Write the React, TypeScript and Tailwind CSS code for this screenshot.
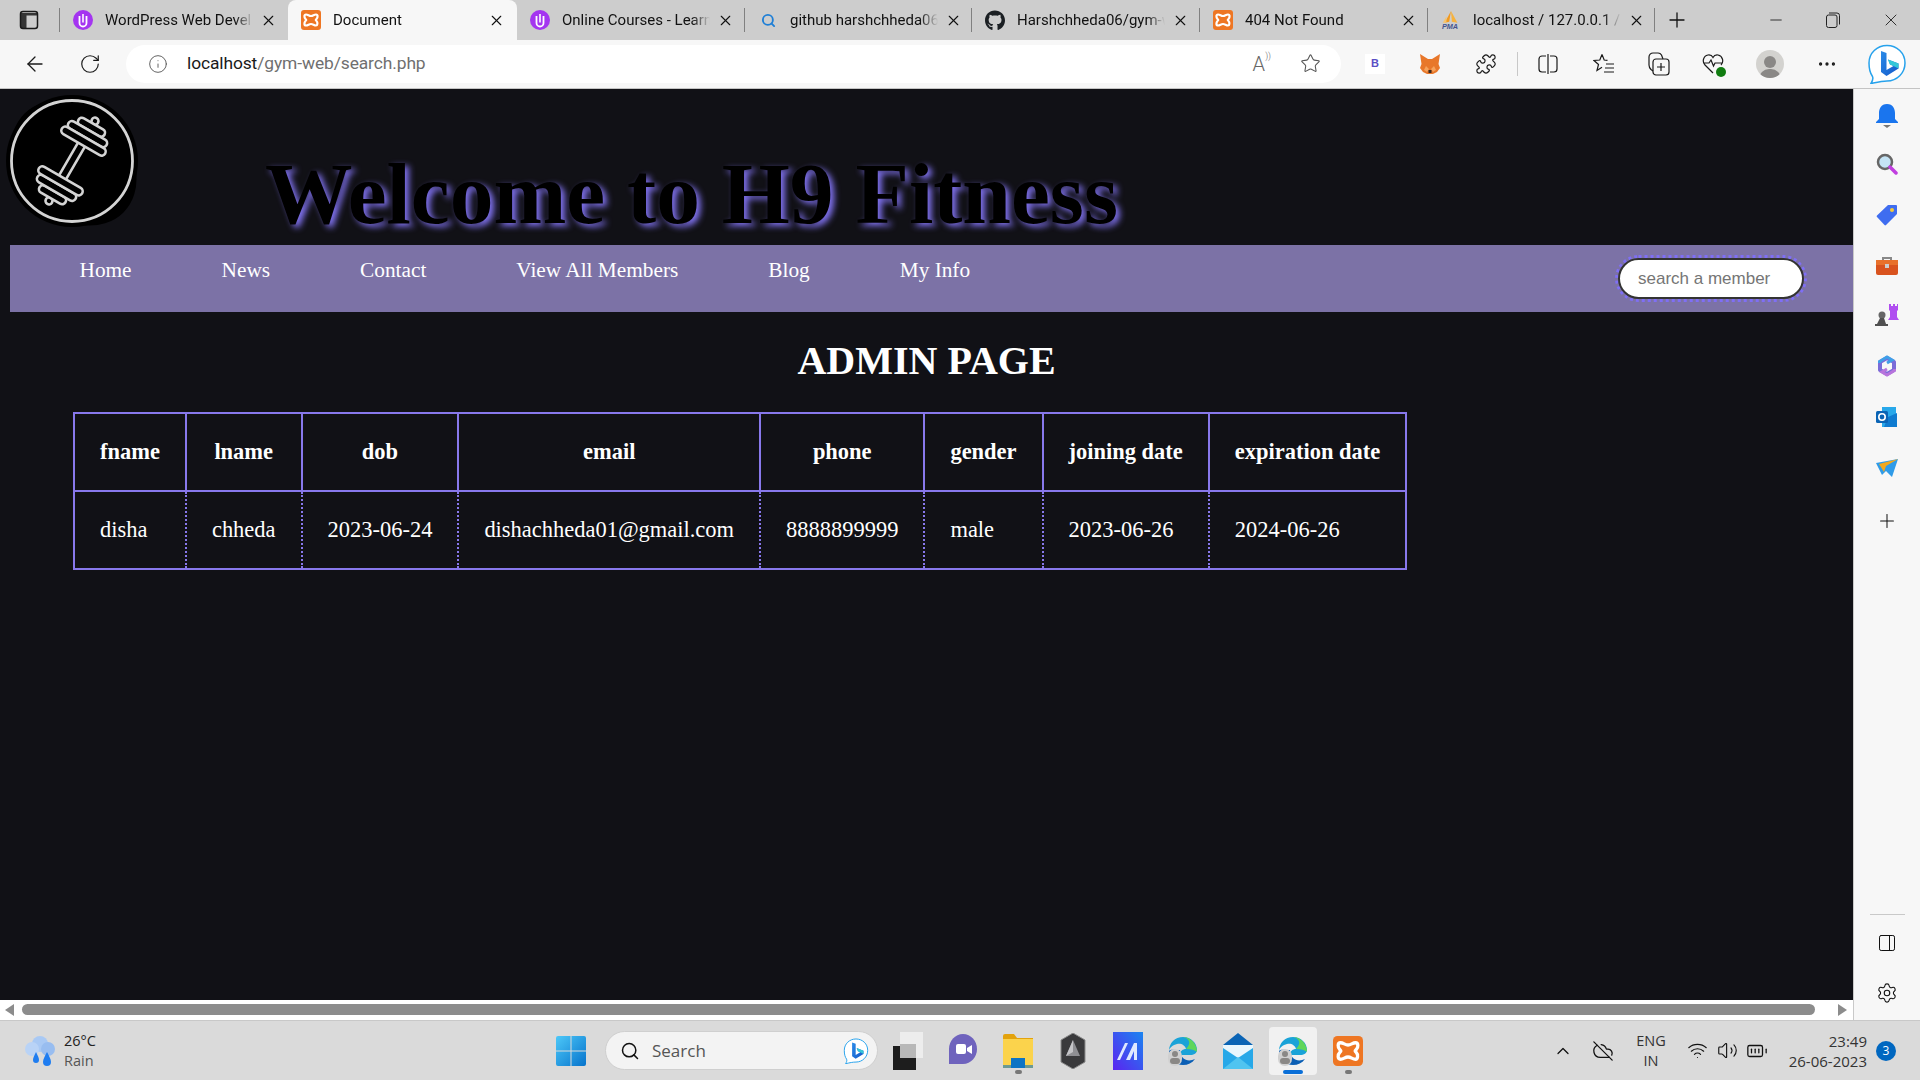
import {
  ArrowLeft,
  BatteryFull,
  ChevronUp,
  CloudOff,
  Info,
  Minus,
  MoreHorizontal,
  PanelRight,
  Plus,
  Puzzle,
  RotateCw,
  Search,
  Settings,
  Star,
  Volume2,
  Wifi,
  X,
} from "lucide-react";
import { FaGithub } from "react-icons/fa";

// favicons
function Clip({ size = 20 }: { size?: number }) {
  return (
    <svg width={size} height={size} viewBox="0 0 20 20">
      <circle cx="10" cy="10" r="10" fill="#a435f0" />
      <path d="M6.500 6v7a3.500 3.500 0 0 0 7 0V6" fill="none" stroke="#fff" strokeWidth="1.800" />
      <path d="M10 4v8.500" stroke="#fff" strokeWidth="1.600" />
    </svg>
  );
}

function Xampp({ size = 20 }: { size?: number }) {
  return (
    <svg width={size} height={size} viewBox="0 0 20 20">
      <rect width="20" height="20" rx="3" fill="#ee7623" />
      <path
        d="M5 4.500c2 0 3 1.500 5 1.500s3-1.500 5-1.500 2 3 .5 4.500c-1 1-1 1.200 0 2 1.500 1.500 1 4.500-.5 4.500-2 0-3-1.500-5-1.500s-3 1.500-5 1.500-2-3-.5-4.500c1-.8 1-1 0-2C3 7.500 3 4.500 5 4.500z"
        fill="none"
        stroke="#fff"
        strokeWidth="2.200"
      />
    </svg>
  );
}

function Pma() {
  return (
    <svg width="22" height="20" viewBox="0 0 22 20">
      <path d="M11 0 L4 13 L9 12z" fill="#f29a1f" />
      <path d="M11 0 L18 13 L12 12z" fill="#f7b23c" />
      <path d="M2 13 L6 6 L6 13z" fill="#f9c46b" />
      <text x="1" y="19.500" fontSize="8" fontWeight="700" fontStyle="italic" fill="#44548f" fontFamily="Liberation Sans, sans-serif">
        PMA
      </text>
    </svg>
  );
}

function Bing({ size = 40 }: { size?: number }) {
  return (
    <svg width={size} height={size} viewBox="0 0 40 40">
      <defs>
        <linearGradient id="bingB" x1="0" y1="0" x2="1" y2="1">
          <stop offset="0" stopColor="#2a8be8" />
          <stop offset="1" stopColor="#1558c9" />
        </linearGradient>
      </defs>
      <path
        d="M20 1.500C30 1.500 38 9 38 19S30 37 20 37c-5 0-9 1-16 2.500 1.500-2.500 2.500-5 1.500-7C3 29 2 25 2 19 2 9 10 1.500 20 1.500z"
        fill="#fff"
        stroke="#27a2ec"
        strokeWidth="1.500"
      />
      <path d="M14 7l5.500 2v17l7-4-3.500-1.500-2-5 10.500 4v5L19.500 32 14 28z" fill="url(#bingB)" />
      <path d="M21 15.500l10.500 4v5L26.500 22 23 20.500z" fill="#34c8d8" />
    </svg>
  );
}

function Logo() {
  const plates = (
    <g fill="none" stroke="#d4d4d4" strokeWidth="2.600">
      <circle cx="0" cy="-46" r="3.500" />
      <rect x="-15" y="-43" width="30" height="8" rx="4" fill="#000" />
      <rect x="-22" y="-35" width="44" height="8" rx="4" fill="#000" />
      <rect x="-25" y="-27" width="50" height="8" rx="4" fill="#000" />
    </g>
  );
  return (
    <svg width="142" height="142" viewBox="0 0 142 142" className="block">
      <g fill="#000">
        <ellipse cx="71" cy="71" rx="70" ry="54" transform="rotate(45 71 71)" />
        <circle cx="69" cy="69" r="66" />
      </g>
      <circle cx="69" cy="69" r="60.500" fill="#000" stroke="#d4d4d4" strokeWidth="2.800" />
      <g transform="translate(69 69) rotate(30)">
        <path d="M-4 -19V19M4 -19V19" stroke="#d4d4d4" strokeWidth="2.600" />
        {plates}
        <g transform="rotate(180)">{plates}</g>
      </g>
    </svg>
  );
}

const tabs = [
  { title: "WordPress Web Devel", icon: <Clip />, w: "w-[228px]", sep: false },
  { title: "Document", icon: <Xampp />, w: "w-[229px]", sep: false, active: true },
  { title: "Online Courses - Learn", icon: <Clip />, w: "w-[228px]", sep: true },
  { title: "github harshchheda06", icon: <Search size={15} strokeWidth={3} className="text-[#1f7fd6]" />, w: "w-[227px]", sep: true },
  { title: "Harshchheda06/gym-w", icon: <FaGithub size={21} className="text-[#1b1f23]" />, w: "w-[228px]", sep: true },
  { title: "404 Not Found", icon: <Xampp />, w: "w-[228px]", sep: true },
  { title: "localhost / 127.0.0.1 /", icon: <Pma />, w: "w-[227px]", sep: true },
];

function TabBar() {
  return (
    <div className="flex h-10 items-center bg-[#cdcdcd] text-[15px] text-[#111] font-['Roboto',sans-serif]">
      <div className="flex h-6 w-[60px] items-center justify-center border-r border-[#808080] pr-[2px]">
        <svg width="20" height="20" viewBox="0 0 20 20" fill="none">
          <rect x="1.500" y="1.500" width="17" height="17" rx="2.500" stroke="#1a1a1a" strokeWidth="1.500" />
          <path d="M2 3h16v2.500H7.500V18H2z" fill="#1a1a1a" opacity="0.85" />
        </svg>
      </div>
      {tabs.map((tab) => (
        <div
          key={tab.title}
          className={`flex h-10 shrink-0 items-center pl-[13px] ${tab.w} ${tab.active ? "rounded-t-lg bg-[#f7f7f7]" : ""}`}
        >
          <span className="flex w-5 shrink-0 items-center justify-center">{tab.icon}</span>
          <span className="ml-3 w-[148px] whitespace-nowrap [mask-image:linear-gradient(to_right,#000_88%,transparent)]">
            {tab.title}
          </span>
          <X size={17} strokeWidth={1.6} className="ml-[7px] shrink-0 text-[#111]" />
          {tab.sep && <span className="ml-auto h-6 w-px bg-[#808080]" />}
        </div>
      ))}
      <Plus size={24} strokeWidth={1.3} className="ml-[10px] text-[#111]" />
      <div className="ml-auto flex items-center text-[#222]">
        <Minus size={18} strokeWidth={1.2} className="mr-[41px]" />
        <svg width="14" height="16" viewBox="0 0 14 16" fill="none" stroke="#222" className="mr-[41px]">
          <rect x="0.500" y="3" width="10.500" height="12.500" rx="2" />
          <path d="M3 1h8a2.500 2.500 0 0 1 2.500 2.500v9" />
        </svg>
        <X size={20} strokeWidth={1.1} className="mr-[19px]" />
      </div>
    </div>
  );
}

function Toolbar() {
  return (
    <div className="flex h-[49px] items-center border-b border-[#c4c4c4] bg-[#f7f7f7] pb-[1px] text-[#1a1a1a]">
      <ArrowLeft size={24} strokeWidth={1.3} className="ml-[23px]" />
      <RotateCw size={22} strokeWidth={1.3} className="ml-[32px]" />
      <div className="ml-[25px] flex h-[38px] w-[1215px] items-center rounded-full bg-white pl-[22px]">
        <Info size={20} strokeWidth={1.1} className="text-[#555]" />
        <span className="ml-[19px] text-[17.400px] tracking-[-0.1px] font-['Roboto',sans-serif]">
          localhost<span className="text-[#6f6f6f]">/gym-web/search.php</span>
        </span>
        <span className="relative ml-auto mr-[35px] text-[20px] font-light leading-none text-[#666] font-['Roboto',sans-serif]">
          A
          <span className="absolute -right-[6px] -top-[2px] text-[9px]">))</span>
        </span>
        <Star size={21} strokeWidth={1.2} className="mr-[20px] text-[#555]" />
      </div>
      <span className="ml-[24px] flex h-5 w-5 items-center justify-center bg-white text-[11px] font-bold text-[#5a4fc4] font-['Liberation_Sans',sans-serif]">
        B
      </span>
      <svg width="22" height="22" viewBox="0 0 22 22" className="ml-[34px]">
        <path d="M1 1l8 5h4l8-5-1.500 10L21 15l-3 4-4 2h-6l-4-2-3-4 1.500-4z" fill="#e8772a" />
        <path d="M7 13l3 3-2 3-3-2zM15 13l-3 3 2 3 3-2z" fill="#f6a35c" />
        <path d="M9.500 17h3v3h-3z" fill="#3a2a22" />
      </svg>
      <Puzzle size={22} strokeWidth={1.3} className="ml-[34px]" />
      <span className="ml-[20px] h-6 w-px bg-[#c8c8c8]" />
      <svg width="20" height="22" viewBox="0 0 20 22" fill="none" stroke="#1a1a1a" strokeWidth="1.200" className="ml-[20px]">
        <path d="M10 1v20M8 3H4a3 3 0 0 0-3 3v10a3 3 0 0 0 3 3h4M12 3h4a3 3 0 0 1 3 3v10a3 3 0 0 1-3 3h-4" />
      </svg>
      <svg width="22" height="22" viewBox="0 0 22 22" fill="none" stroke="#1a1a1a" strokeWidth="1.200" className="ml-[35px]">
        <path d="M9 1.500l2.200 5.500 3.300.3M9 1.500L6.800 7 1 7.500l4.500 4-1.500 6 5-3.200M13 11h8M12 15h9M11 19h10" />
      </svg>
      <svg width="22" height="24" viewBox="0 0 22 24" fill="none" stroke="#1a1a1a" strokeWidth="1.200" className="ml-[33px]">
        <rect x="5" y="7" width="16" height="16" rx="3" />
        <path d="M13 11v8M9 15h8M5 19l-2-1.500C1.500 16 1 15 1 13V5a4 4 0 0 1 4-4h5a4 4 0 0 1 3.500 2l1.500 4" />
      </svg>
      <span className="relative ml-[32px] block h-[22px] w-[22px]">
        <svg width="22" height="22" viewBox="0 0 22 22" fill="none" stroke="#1a1a1a" strokeWidth="1.200">
          <path d="M11 20L3 12C0 9 1 3 6 2c2-.3 4 .5 5 2.500C12 2.500 14 1.700 16 2c5 1 6 7 3 10M1.500 10H7l2-3 2.500 6 1.500-3h7" />
        </svg>
        <span className="absolute -bottom-[2px] -right-[2px] h-[10px] w-[10px] rounded-full bg-[#107c10]" />
      </span>
      <span className="relative ml-[32px] block h-7 w-7 overflow-hidden rounded-full bg-[#d3d2cf]">
        <span className="absolute left-[8px] top-[6px] h-3 w-3 rounded-full bg-[#8a8886]" />
        <span className="absolute left-[3px] top-[19px] h-5 w-[22px] rounded-full bg-[#8a8886]" />
      </span>
      <MoreHorizontal size={22} strokeWidth={1.6} className="ml-[32px]" />
      <span className="ml-[29px]">
        <Bing size={40} />
      </span>
    </div>
  );
}

const columns = ["fname", "lname", "dob", "email", "phone", "gender", "joining date", "expiration date"];
const member = ["disha", "chheda", "2023-06-24", "dishachheda01@gmail.com", "8888899999", "male", "2023-06-26", "2024-06-26"];

function Page() {
  return (
    <main className="min-w-0 flex-1 bg-[#111116] text-white font-['Liberation_Serif',serif]">
      <header className="flex h-[156px] items-start">
        <div className="ml-[3px] mt-[3px] shrink-0">
          <Logo />
        </div>
        <h1 className="ml-[120px] mt-[56px] whitespace-nowrap text-[87.500px] font-bold leading-[98px] text-black [text-shadow:4px_3px_6px_#8072f0]">
          Welcome to H9 Fitness
        </h1>
      </header>
      <nav className="ml-[10px] flex h-[67px] items-start bg-[#7c72a6] pl-[69.500px] pr-[46px] text-[21.300px]">
        <ul className="flex gap-[90px] pt-[13px] leading-[25px]">
          {["Home", "News", "Contact", "View All Members", "Blog", "My Info"].map((item) => (
            <li key={item}>{item}</li>
          ))}
        </ul>
        <div className="ml-auto mt-[10px] rounded-full border-[3px] border-dotted border-[#7f6ff5]">
          <input
            readOnly
            placeholder="search a member"
            className="block h-[41px] w-[186px] rounded-full border-2 border-[#333] bg-white pl-[18px] text-[17px] text-[#333] placeholder:text-[#757575] font-['Liberation_Sans',sans-serif]"
          />
        </div>
      </nav>
      <h2 className="mt-[26px] text-center text-[40px] font-bold leading-[46px]">ADMIN PAGE</h2>
      <table className="ml-[73px] mt-[28px] border-collapse border-2 border-solid border-[#8878ec] text-[22.480px] leading-[26px]">
        <thead>
          <tr>
            {columns.map((col) => (
              <th key={col} className="border-2 border-solid border-[#8878ec] p-[25px] font-bold">
                {col}
              </th>
            ))}
          </tr>
        </thead>
        <tbody>
          <tr>
            {member.map((val) => (
              <td key={val} className="border-2 border-dotted border-[#8878ec] p-[25px] text-left">
                {val}
              </td>
            ))}
          </tr>
        </tbody>
      </table>
    </main>
  );
}

function Scrollbar() {
  return (
    <div className="flex h-5 items-center bg-white pb-[1px]">
      <span className="ml-[5px] h-0 w-0 border-y-[6px] border-r-[9px] border-y-transparent border-r-[#8c8c8c]" />
      <span className="ml-[8px] h-[11px] w-[1793px] rounded-full bg-[#8c8c8c]" />
      <span className="ml-[23px] h-0 w-0 border-y-[6px] border-l-[9px] border-y-transparent border-l-[#8c8c8c]" />
    </div>
  );
}

function SideTile({ children, className = "" }: { children: React.ReactNode; className?: string }) {
  return <div className={`flex h-[50px] items-center justify-center ${className}`}>{children}</div>;
}

function Sidebar() {
  return (
    <aside className="flex w-[67px] shrink-0 flex-col items-center border-l border-[#c9c9c9] bg-[#f7f7f7] pt-[2px]">
      <SideTile>
        <svg width="24" height="26" viewBox="0 0 24 26">
          <path d="M12 1c6 0 8 5 8 9v6l3 3v1H1v-1l3-3v-6c0-4 2-9 8-9z" fill="#1a75ee" />
          <path d="M8 22h8l-4 3z" fill="#777" />
        </svg>
      </SideTile>
      <SideTile className="-mt-[2px]">
        <svg width="22" height="22" viewBox="0 0 22 22">
          <circle cx="9" cy="9" r="7" fill="#c4e3f4" stroke="#666" strokeWidth="2.500" />
          <path d="M14 14l6 6" stroke="#c13fe0" strokeWidth="3.500" strokeLinecap="round" />
        </svg>
      </SideTile>
      <SideTile className="mt-[1px]">
        <svg width="22" height="22" viewBox="0 0 22 22">
          <path d="M12 1h8a1 1 0 0 1 1 1v8L10 21a1 1 0 0 1-1.500 0L1 13a1 1 0 0 1 0-1.500z" fill="#3f6df0" />
          <circle cx="16" cy="6" r="2" fill="#f4c93a" />
        </svg>
      </SideTile>
      <SideTile className="mt-[1px]">
        <svg width="24" height="20" viewBox="0 0 24 20">
          <path d="M8 5V2h8v3" fill="none" stroke="#888" strokeWidth="2" />
          <rect x="1" y="4" width="22" height="15" rx="2" fill="#d9531e" />
          <rect x="1" y="4" width="22" height="5" fill="#e8702a" />
          <rect x="10" y="8" width="4" height="4" fill="#ccc" />
        </svg>
      </SideTile>
      <SideTile className="-mt-[1px]">
        <svg width="24" height="24" viewBox="0 0 24 24">
          <path d="M14 1h2v2h2V1h2v2h2V1h1v6l-1 1v6l2 3H13l2-3V8l-1-1z" fill="#b04ef0" />
          <circle cx="7" cy="12" r="3.500" fill="#666" />
          <path d="M5 15h4l2 6h2v2H0v-2h2z" fill="#505050" />
        </svg>
      </SideTile>
      <SideTile className="mt-[1px]">
        <svg width="22" height="22" viewBox="0 0 22 22" fill="none">
          <path d="M11 3l7 4v8l-7 4-7-4V7z" stroke="#7a6bd8" strokeWidth="4" strokeLinejoin="round" />
          <path d="M3.500 8V6.500L11 2l5 3-5 3" stroke="#3f9fe8" strokeWidth="3" />
          <path d="M18.500 14v1.500L11 20l-5-3 5-3" stroke="#b874dc" strokeWidth="3" />
        </svg>
      </SideTile>
      <SideTile className="mt-[1px]">
        <svg width="22" height="22" viewBox="0 0 22 22">
          <path d="M6 1h14v20H6z" fill="#28a8ea" />
          <path d="M12 11l9-4v14H8z" fill="#0f7bd0" />
          <rect x="0" y="5" width="12" height="12" rx="1.500" fill="#0a64b5" />
          <circle cx="6" cy="11" r="3.200" fill="none" stroke="#fff" strokeWidth="1.600" />
        </svg>
      </SideTile>
      <SideTile className="mt-[1px]">
        <svg width="22" height="18" viewBox="0 0 22 18">
          <path d="M0 4l22-4-6 18-6-6-4 4z" fill="#2f9be8" />
          <path d="M3 5l19-5-12 7-2 6z" fill="#f2a81d" />
        </svg>
      </SideTile>
      <SideTile className="mt-[3px]">
        <Plus size={22} strokeWidth={1.1} className="text-[#111]" />
      </SideTile>
      <span className="mt-auto h-px w-[35px] bg-[#c9c9c9]" />
      <SideTile className="mt-[3px]">
        <PanelRight size={20} strokeWidth={1.2} className="text-[#111]" />
      </SideTile>
      <SideTile className="mb-[2px]">
        <Settings size={22} strokeWidth={1.2} className="text-[#111]" />
      </SideTile>
    </aside>
  );
}

const Win = () => (
  <svg width="30" height="30" viewBox="0 0 30 30">
    <defs>
      <linearGradient id="winG" x1="0" y1="0" x2="1" y2="1">
        <stop offset="0" stopColor="#4dc8f8" />
        <stop offset="1" stopColor="#0673cc" />
      </linearGradient>
    </defs>
    <path d="M0 2a2 2 0 0 1 2-2h12.500v14.500H0zM15.500 0H28a2 2 0 0 1 2 2v12.500H15.500zM0 15.500h14.500V30H2a2 2 0 0 1-2-2zM15.500 15.500H30V28a2 2 0 0 1-2 2H15.500z" fill="url(#winG)" />
  </svg>
);

function TaskIcon({ children, mark, active }: { children: React.ReactNode; mark?: "gray" | "blue"; active?: boolean }) {
  return (
    <div className={`relative flex h-12 w-[48px] shrink-0 items-center justify-center rounded ${active ? "bg-[#f1f1f1]" : ""}`}>
      {children}
      {mark === "gray" && <span className="absolute bottom-[1px] h-[4px] w-[7px] rounded-full bg-[#777]" />}
      {mark === "blue" && <span className="absolute bottom-[1px] h-[4px] w-5 rounded-full bg-[#0a6fd8]" />}
    </div>
  );
}

const Edge = () => (
  <span className="relative block h-[30px] w-[30px]">
    <svg width="30" height="30" viewBox="0 0 30 30">
      <path d="M1 15C1 7 7 1 15 1c8 0 14 6 14 13 0 3-3 5-7 5H12c0-4 3-6 6-6-1-4-5-6-9-5-4 1-8 4-8 7z" fill="#1aa3d8" />
      <path d="M18 13c5 0 9 1 11 3 0-8-6-15-14-15 6 1 9 6 3 12z" fill="#5fd65a" />
      <path d="M1 15c0 8 6 14 14 14 5 0 9-2 12-6-4 2-9 2-12-1-2-2-3-5-3-8-5 0-10-1-11 1z" fill="#0b5fb5" />
    </svg>
    <span className="absolute bottom-0 left-0 flex h-[17px] w-[14px] flex-col items-center rounded-full bg-[#d0d0d0]">
      <span className="mt-[2px] h-[6px] w-[6px] rounded-full bg-[#8a8886]" />
      <span className="mt-[1px] h-[6px] w-[10px] rounded-full bg-[#8a8886]" />
    </span>
  </span>
);

function Taskbar() {
  return (
    <footer className="flex h-[60px] items-center border-t border-[#c8c8c8] bg-[#dadada] text-[#222] font-['Open_Sans',sans-serif]">
      <svg width="34" height="34" viewBox="0 0 34 34" className="ml-[23px] shrink-0">
        <circle cx="17" cy="10" r="8" fill="#a9c9f4" />
        <circle cx="9" cy="15" r="7" fill="#b9d3f6" />
        <circle cx="25" cy="15" r="7" fill="#98bdf0" />
        <path d="M13 18c2 4 3 6 3 8a3 3 0 0 1-6 0c0-2 1-4 3-8zM24 18c2 4 4 7 4 10a4 4 0 0 1-8 0c0-3 2-6 4-10z" fill="#1f7df0" />
      </svg>
      <div className="ml-[7px] w-[60px] text-[14.500px] leading-[20px]">
        <div>26°C</div>
        <div className="text-[#555]">Rain</div>
      </div>
      <div className="ml-[432px] flex shrink-0">
        <Win />
      </div>
      <div className="ml-[19px] flex h-[39px] w-[273px] shrink-0 items-center rounded-full border border-[#cfcfcf] bg-[#f3f3f3] pl-[14px]">
        <Search size={20} strokeWidth={1.8} className="text-[#111]" />
        <span className="ml-[12px] text-[17px] text-[#555]">Search</span>
        <span className="ml-auto mr-[8px]">
          <Bing size={26} />
        </span>
      </div>
      <div className="ml-[6px] flex items-center gap-[7px]">
        <TaskIcon>
          <span className="relative block h-[38px] w-[30px]">
            <span className="absolute left-[7px] top-0 h-[26px] w-[23px] bg-[#ededed]" />
            <span className="absolute bottom-0 left-0 h-[24px] w-[23px] bg-[#1d1d1d]" />
            <span className="absolute left-[7px] top-[12px] h-[14px] w-[16px] bg-[#b8b8b8]" />
          </span>
        </TaskIcon>
        <TaskIcon>
          <svg width="30" height="34" viewBox="0 0 30 34">
            <path d="M15 0c8 0 14 7 14 15s-6 15-14 15H1V15C1 7 7 0 15 0z" fill="#6f63bd" />
            <rect x="8" y="10" width="10" height="10" rx="2" fill="#fff" />
            <path d="M19 14l5-3v9l-5-3z" fill="#fff" />
          </svg>
        </TaskIcon>
        <TaskIcon mark="gray">
          <svg width="30" height="34" viewBox="0 0 30 34">
            <path d="M0 2a2 2 0 0 1 2-2h9l3 4h16v4H0z" fill="#e3a20c" />
            <rect y="5" width="30" height="29" fill="#fbd34c" />
            <rect x="8" y="24" width="14" height="10" fill="#0d74c4" />
            <rect y="31" width="30" height="3" fill="#0d74c4" opacity="0.6" />
          </svg>
        </TaskIcon>
        <TaskIcon>
          <svg width="28" height="36" viewBox="0 0 28 36">
            <path d="M14 0l12 7v22l-12 7L2 29V7z" fill="#3a3a3c" stroke="#8c8c8c" />
            <path d="M14 7L7 23h14z" fill="#8f8f93" />
            <path d="M14 7l-7 16 7-4z" fill="#c5c5c8" />
          </svg>
        </TaskIcon>
        <TaskIcon>
          <svg width="30" height="38" viewBox="0 0 30 38">
            <defs>
              <linearGradient id="blueG" x1="0" y1="1" x2="1" y2="0">
                <stop offset="0" stopColor="#5b24f0" />
                <stop offset="1" stopColor="#1b85f0" />
              </linearGradient>
            </defs>
            <rect width="30" height="38" fill="url(#blueG)" />
            <path d="M4 28l8-17h3l-8 17zM13 28l8-17h3v17h-3V19l-4 9z" fill="#dfe8ff" />
          </svg>
        </TaskIcon>
        <TaskIcon>
          <Edge />
        </TaskIcon>
        <TaskIcon>
          <svg width="30" height="36" viewBox="0 0 30 36">
            <path d="M15 0l15 12v24H0V12z" fill="#0a64b5" />
            <rect y="15" width="30" height="21" fill="#27a8e8" />
            <path d="M0 15l15 10 15-10v-3H0z" fill="#e8f6fd" />
            <path d="M0 36l15-12 15 12z" fill="#50c4f0" />
          </svg>
        </TaskIcon>
        <TaskIcon mark="blue" active>
          <Edge />
        </TaskIcon>
        <TaskIcon mark="gray">
          <Xampp size={30} />
        </TaskIcon>
      </div>
      <ChevronUp size={20} strokeWidth={1.5} className="ml-[181px] shrink-0 text-[#111]" />
      <CloudOff size={22} strokeWidth={1.4} className="ml-[19px] shrink-0 text-[#111]" />
      <div className="ml-[15px] w-[44px] shrink-0 text-center text-[14.500px] leading-[20px] text-[#333]">
        ENG
        <br />
        IN
      </div>
      <Wifi size={21} strokeWidth={1.3} className="ml-[14px] shrink-0 text-[#111]" />
      <Volume2 size={21} strokeWidth={1.3} className="ml-[9px] shrink-0 text-[#111]" />
      <BatteryFull size={22} strokeWidth={1.4} className="ml-[8px] shrink-0 text-[#111]" />
      <div className="ml-[6px] w-[93px] shrink-0 text-right text-[15px] leading-[20px] text-[#333]">
        23:49
        <br />
        26-06-2023
      </div>
      <span className="ml-[9px] flex h-5 w-5 shrink-0 items-center justify-center rounded-full bg-[#0067c0] text-[12px] text-white">
        3
      </span>
    </footer>
  );
}

export default function App() {
  return (
    <div className="flex h-screen w-full flex-col overflow-hidden">
      <TabBar />
      <Toolbar />
      <div className="flex min-h-0 flex-1">
        <div className="flex min-w-0 flex-1 flex-col">
          <Page />
          <Scrollbar />
        </div>
        <Sidebar />
      </div>
      <Taskbar />
    </div>
  );
}
